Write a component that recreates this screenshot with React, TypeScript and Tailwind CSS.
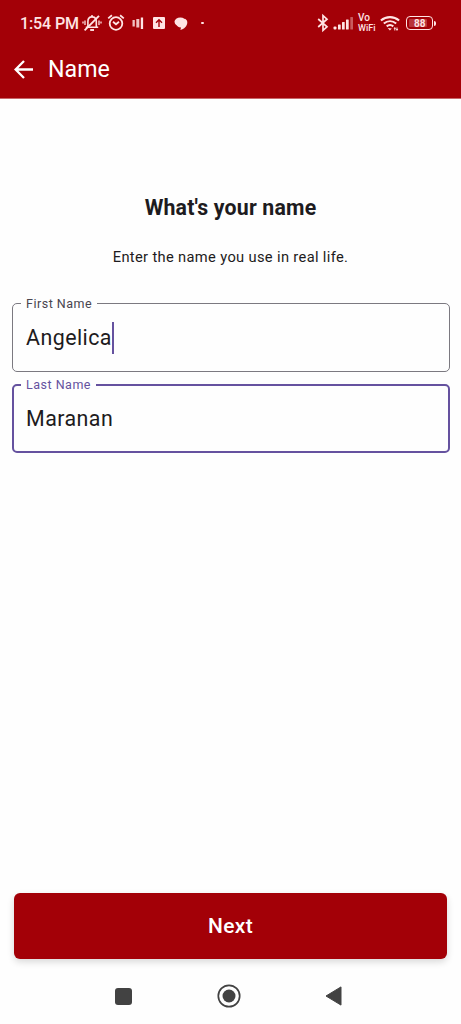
import { useState } from 'react';

// Status bar icons, drawn on a 20px high strip
function MutedBellIcon() {
    return (
        <svg className="w-5 h-5 shrink-0" viewBox="0 0 20 20" fill="none" stroke="currentColor" strokeWidth="1.6">
            <path d="M3.8 14.2h12.4M5.9 13.6V8.6c0-2.9 1.7-4.7 4.1-4.7s4.3 1.8 4.3 4.7v5M9 3h2" />
            <path d="M8.2 17h3.8" strokeWidth="1.9" />
            <path d="M3 7.5v4.5M1 8.5v2M17 7.5v4.5M19 8.5v2" strokeWidth="1.3" />
            <path d="M17 2.8 2.6 17.4" strokeWidth="1.9" />
        </svg>
    );
}

function AlarmIcon() {
    return (
        <svg className="w-[18px] h-5 shrink-0" viewBox="0 0 18 20" fill="none" stroke="currentColor" strokeWidth="1.8">
            <circle cx="9" cy="10.5" r="6.3" />
            <path d="m1.2 5.4 3.7-3.1M16.8 5.4l-3.7-3.1" />
            <path d="m6 8.8 3 2.5 3-2.5" />
        </svg>
    );
}

function BarsIcon() {
    return (
        <svg className="w-3 h-5 shrink-0" viewBox="0 0 12 20" fill="currentColor">
            <rect x=".5" y="7" width="2.3" height="6.5" opacity=".85" />
            <rect x="4.3" y="6" width="3" height="8.5" opacity=".85" />
            <rect x="8.8" y="4.5" width="2.3" height="11.5" />
        </svg>
    );
}

function UploadIcon() {
    return (
        <svg className="w-3 h-5 shrink-0" viewBox="0 0 12 20">
            <rect x="0" y="4" width="12" height="12" rx="1" fill="currentColor" />
            <path d="M6 14V7M3 9.7l3-3 3 3" fill="none" stroke="#a30007" strokeWidth="1.4" />
        </svg>
    );
}

function ChatIcon() {
    return (
        <svg className="w-[14px] h-5 shrink-0" viewBox="0 0 14 20" fill="currentColor">
            <ellipse cx="6.3" cy="8.8" rx="5.8" ry="4.4" />
            <path d="M2.5 10.5c0 2.6 2 4 4.5 4l-.6 2.4c3.7-.7 6.9-3.9 6.9-7.4 0-1.6-.8-2.9-2.3-3.7Z" />
        </svg>
    );
}

function BluetoothIcon() {
    return (
        <svg className="w-3 h-5 shrink-0" viewBox="0 0 12 20" fill="none" stroke="currentColor" strokeWidth="1.7">
            <path d="m1.2 6 8.8 7.8L6 17.3V2.7L10 6.2 1.2 14" />
        </svg>
    );
}

function SignalIcon() {
    return (
        <svg className="w-[21px] h-5 shrink-0" viewBox="0 0 21 20" fill="currentColor">
            <rect x=".5" y="13.5" width="3" height="3" rx="1" />
            <rect x="5" y="11.5" width="2.7" height="5" rx=".5" />
            <rect x="9" y="9" width="2.7" height="7.5" rx=".5" />
            <rect x="13" y="6.5" width="2.7" height="10" rx=".5" />
            <rect x="17.3" y="4" width="2.7" height="12.5" rx=".5" opacity=".4" />
        </svg>
    );
}

function WifiIcon() {
    return (
        <svg className="w-5 h-5 shrink-0" viewBox="0 0 20 20" fill="none" stroke="currentColor" strokeWidth="2.1">
            <path d="M.9 7.5c5.3-4.5 12.9-4.5 18.2 0M3.8 10.5c3.7-3.1 8.7-3.1 12.4 0M6.7 13.4c2-1.7 4.6-1.7 6.6 0" />
            <path d="m7.7 15 2.2 2.6 1.9-2Z" fill="currentColor" stroke="none" />
            <path d="M14.8 17.5v-3M17 14.5v3" strokeWidth="1" />
            <path d="m13.5 15.7 1.3-1.5 1.3 1.5ZM15.7 16l1.3 1.5 1.3-1.5Z" fill="currentColor" stroke="none" />
        </svg>
    );
}

function Battery({ level }: { level: number }) {
    return (
        <div className="flex items-center">
            <div className="w-[27px] h-[14px] rounded-[4px] border border-[#ffe4e4] p-[2px]">
                <div className="h-full w-[18px] rounded-[1px] bg-[#b8333a] pl-[5px] text-[10px] leading-[9px] font-bold">{level}</div>
            </div>
            <div className="ml-px w-[2px] h-[5px] rounded-r bg-[#ffe4e4]" />
        </div>
    );
}

function StatusBar() {
    return (
        <div className="h-[46px] pl-5 pr-[25px] flex items-center justify-between text-[#ffe4e4]">
            <div className="flex items-center">
                <span className="w-[62px] whitespace-nowrap pt-px text-[16px] leading-5 font-medium tracking-[-0.1px]">1:54 PM</span>
                <MutedBellIcon />
                <div className="w-[5px]" />
                <AlarmIcon />
                <div className="w-[7px]" />
                <BarsIcon />
                <div className="w-[9px]" />
                <UploadIcon />
                <div className="w-[9px]" />
                <ChatIcon />
                <div className="ml-[13px] size-[2.5px] rounded-full bg-[#ffe4e4]" />
            </div>
            <div className="flex items-center">
                <BluetoothIcon />
                <div className="w-1" />
                <SignalIcon />
                <div className="ml-1 w-[22px] font-medium">
                    <div className="text-[10px] leading-[10px]">Vo</div>
                    <div className="text-[9px] leading-[10px]">WiFi</div>
                </div>
                <WifiIcon />
                <div className="w-[6px]" />
                <Battery level={88} />
            </div>
        </div>
    );
}

interface TextFieldProps {
    label: string;
    value: string;
    onChange: (value: string) => void;
    active?: boolean;
    caret?: boolean;
}

function TextField({ label, value, onChange, active, caret }: TextFieldProps) {
    return (
        <fieldset
            className={
                active
                    ? 'h-[76px] rounded-[5px] border-2 border-[#65529f] pl-[7.5px] min-w-0'
                    : 'h-[76px] rounded-[5px] border border-[#7b7980] pl-[8.5px] min-w-0'
            }
        >
            <legend
                className={
                    active
                        ? 'px-[5px] text-[12.5px] leading-4 tracking-[0.5px] text-[#65529f]'
                        : 'px-[5px] text-[12.5px] leading-[15px] tracking-[0.5px] text-[#49454f]'
                }
            >
                {label}
            </legend>
            <div className={active ? 'flex items-center h-[52px] pl-[5px]' : 'flex items-center h-[54px] pl-[5px]'}>
                <input
                    className="field-sizing-content bg-transparent outline-none pt-px text-[21.4px] tracking-[0.45px] text-[#1d1b20]"
                    value={value}
                    onChange={(e) => onChange(e.target.value)}
                />
                {caret && <span className="w-[2px] h-8 bg-[#65529f]" />}
            </div>
        </fieldset>
    );
}

export default function App() {
    const [firstName, setFirstName] = useState('Angelica');
    const [lastName, setLastName] = useState('Maranan');

    return (
        <div className="h-[1024px] flex flex-col bg-[#fefefe] font-[Roboto,sans-serif] text-[#1d1b20]">
            <header className="h-[98px] bg-[#a30007] shrink-0 box-content border-b border-[#c8666a]">
                <StatusBar />
                <div className="h-[46px] pl-[14px] flex items-center text-white">
                    <svg className="w-[20px] h-[20px]" viewBox="0 0 20 20" fill="none" stroke="currentColor" strokeWidth="2.3">
                        <path d="M19 10.5H2M10 2 1.6 10.5l8.4 8.5" />
                    </svg>
                    <h1 className="ml-[14px] text-[23.2px] leading-7">Name</h1>
                </div>
            </header>

            <main className="flex-1 flex flex-col px-[11.5px]">
                <h2 className="mt-[95px] text-center text-[21.3px] leading-7 font-bold tracking-[0.18px]">What's your name</h2>
                <p className="mt-[25px] text-center text-[14.7px] leading-5 tracking-[0.34px]">Enter the name you use in real life.</p>
                <div className="mt-[29px] flex flex-col gap-[5px]">
                    <TextField label="First Name" value={firstName} onChange={setFirstName} caret />
                    <TextField label="Last Name" value={lastName} onChange={setLastName} active />
                </div>
                <button className="mt-auto mx-[2.5px] h-[66px] pt-[2px] rounded-[6px] bg-[#a30007] text-white text-[21px] font-medium tracking-[0.3px] shadow-[0_3px_7px_rgba(0,0,0,0.15)]">
                    Next
                </button>
            </main>

            {/* Android navigation bar */}
            <nav className="h-[65px] shrink-0 pt-[9px] pl-[115px] pr-[119px] flex items-center justify-between text-[#424242]">
                <div className="size-[17px] rounded-[3px] bg-[#424242]" />
                <svg className="size-6" viewBox="0 0 24 24" fill="none" stroke="currentColor" strokeWidth="1.7">
                    <circle cx="12" cy="12" r="10.7" />
                    <circle cx="12" cy="12" r="6.5" fill="currentColor" stroke="none" />
                </svg>
                <svg className="w-[17px] h-5" viewBox="0 0 17 20" fill="currentColor" stroke="currentColor" strokeLinejoin="round">
                    <path d="M1 10 16 .9v18.2Z" />
                </svg>
            </nav>
        </div>
    );
}
